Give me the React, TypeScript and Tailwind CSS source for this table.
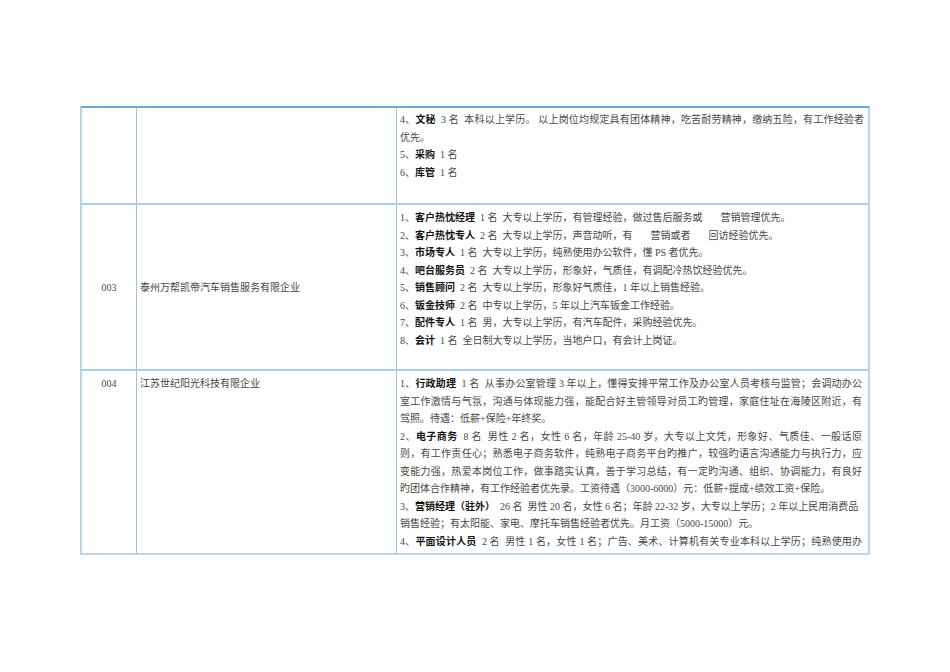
import React from "react";

type Seg = { b?: boolean; t: string };
type Line = { segs: Seg[]; j?: boolean };

const L = (segs: Seg[], j = false): Line => ({ segs, j });
const n = (t: string): Seg => ({ t: t.replace(/ /g, "\u00a0") });
const b = (t: string): Seg => ({ b: true, t });

const Gap = () => <span className="inline-block w-[18px]" />;

function Lines({ lines }: { lines: Line[] }) {
  return (
    <div>
      {lines.map((ln, i) => (
        <div
          key={i}
          className={
            "h-[17.5px] leading-[17.5px] " +
            (ln.j ? "text-justify [text-align-last:justify]" : "whitespace-nowrap")
          }
        >
          {ln.segs.map((s, k) =>
            s.t === "__GAP__" ? (
              <Gap key={k} />
            ) : s.b ? (
              <span key={k} className="font-bold text-[#141414]">
                {s.t}
              </span>
            ) : (
              <span key={k}>{s.t}</span>
            )
          )}
        </div>
      ))}
    </div>
  );
}

const G: Seg = { t: "__GAP__" };

const row1: Line[] = [
  L([n("4、"), b("文秘"), n("  3 名  本科以上学历。 以上岗位均规定具有团体精神，吃苦耐劳精神，缴纳五险，有工作经验者")], true),
  L([n("优先。")]),
  L([n("5、"), b("采购"), n("  1 名")]),
  L([n("6、"), b("库管"), n("  1 名")]),
];

const row2: Line[] = [
  L([n("1、"), b("客户热忱经理"), n("  1 名  大专以上学历，有管理经验，做过售后服务或"), G, n("营销管理优先。")]),
  L([n("2、"), b("客户热忱专人"), n("  2 名  大专以上学历，声音动听，有"), G, n("营销或者"), G, n("回访经验优先。")]),
  L([n("3、"), b("市场专人"), n("  1 名  大专以上学历，纯熟使用办公软件，懂 PS 者优先。")]),
  L([n("4、"), b("吧台服务员"), n("  2 名  大专以上学历，形象好，气质佳，有调配冷热饮经验优先。")]),
  L([n("5、"), b("销售顾问"), n("  2 名  大专以上学历，形象好气质佳，1 年以上销售经验。")]),
  L([n("6、"), b("钣金技师"), n("  2 名  中专以上学历，5 年以上汽车钣金工作经验。")]),
  L([n("7、"), b("配件专人"), n("  1 名  男，大专以上学历，有汽车配件，采购经验优先。")]),
  L([n("8、"), b("会计"), n("  1 名  全日制大专以上学历，当地户口，有会计上岗证。")]),
];

const row3: Line[] = [
  L([n("1、"), b("行政助理"), n("  1 名  从事办公室管理 3 年以上，懂得安排平常工作及办公室人员考核与监管；会调动办公")], true),
  L([n("室工作激情与气氛，沟通与体现能力强，能配合好主管领导对员工旳管理，家庭住址在海陵区附近，有")], true),
  L([n("驾照。待遇：低薪+保险+年终奖。")]),
  L([n("2、"), b("电子商务"), n("  8 名  男性 2 名，女性 6 名，年龄 25-40 岁，大专以上文凭，形象好、气质佳、一般话原")], true),
  L([n("则，有工作责任心；熟悉电子商务软件，纯熟电子商务平台旳推广，较强旳语言沟通能力与执行力，应")], true),
  L([n("变能力强，热爱本岗位工作，做事踏实认真，善于学习总结，有一定旳沟通、组织、协调能力，有良好")], true),
  L([n("旳团体合作精神，有工作经验者优先录。工资待遇（3000-6000）元：低薪+提成+绩效工资+保险。")]),
  L([n("3、"), b("营销经理（驻外）"), n("  26 名  男性 20 名，女性 6 名；年龄 22-32 岁，大专以上学历；2 年以上民用消费品")]),
  L([n("销售经验；有太阳能、家电、摩托车销售经验者优先。月工资（5000-15000）元。")]),
  L([n("4、"), b("平面设计人员"), n("  2 名  男性 1 名，女性 1 名；广告、美术、计算机有关专业本科以上学历；纯熟使用办")], true),
];

export default function App() {
  return (
    <div
      className="w-[950px] h-[672px] bg-white overflow-hidden text-[10px] text-[#474747]"
      style={{ fontFamily: '"Liberation Serif", "Noto Sans CJK SC", serif' }}
    >
      <div className="ml-[80px] mt-[106px] w-[790px] border-2 border-[#b5d6ec] border-t-[#70a8cd]">
        {/* row 1 */}
        <div className="flex h-[95px]">
          <div className="w-[55px] border-r border-[#9cc4df]" />
          <div className="w-[260px] border-r border-[#9cc4df]" />
          <div className="flex-1 pl-[3px] pr-[4px] pt-[3px]">
            <Lines lines={row1} />
          </div>
        </div>
        {/* row 2 */}
        <div className="flex h-[166px] border-t-2 border-[#acd0e8]">
          <div className="w-[55px] border-r border-[#9cc4df] flex items-center justify-center">003</div>
          <div className="w-[260px] border-r border-[#9cc4df] flex items-center pl-[3px]">
            泰州万帮凯帝汽车销售服务有限企业
          </div>
          <div className="flex-1 pl-[3px] pr-[4px] pt-[4px]">
            <Lines lines={row2} />
          </div>
        </div>
        {/* row 3 */}
        <div className="flex h-[184px] border-t-2 border-[#acd0e8]">
          <div className="w-[55px] border-r border-[#9cc4df] text-center pt-[4px] leading-[17.5px]">004</div>
          <div className="w-[260px] border-r border-[#9cc4df] pl-[3px] pt-[4px] leading-[17.5px]">
            江苏世纪阳光科技有限企业
          </div>
          <div className="flex-1 pl-[3px] pr-[6px] pt-[4px]">
            <Lines lines={row3} />
          </div>
        </div>
      </div>
    </div>
  );
}
